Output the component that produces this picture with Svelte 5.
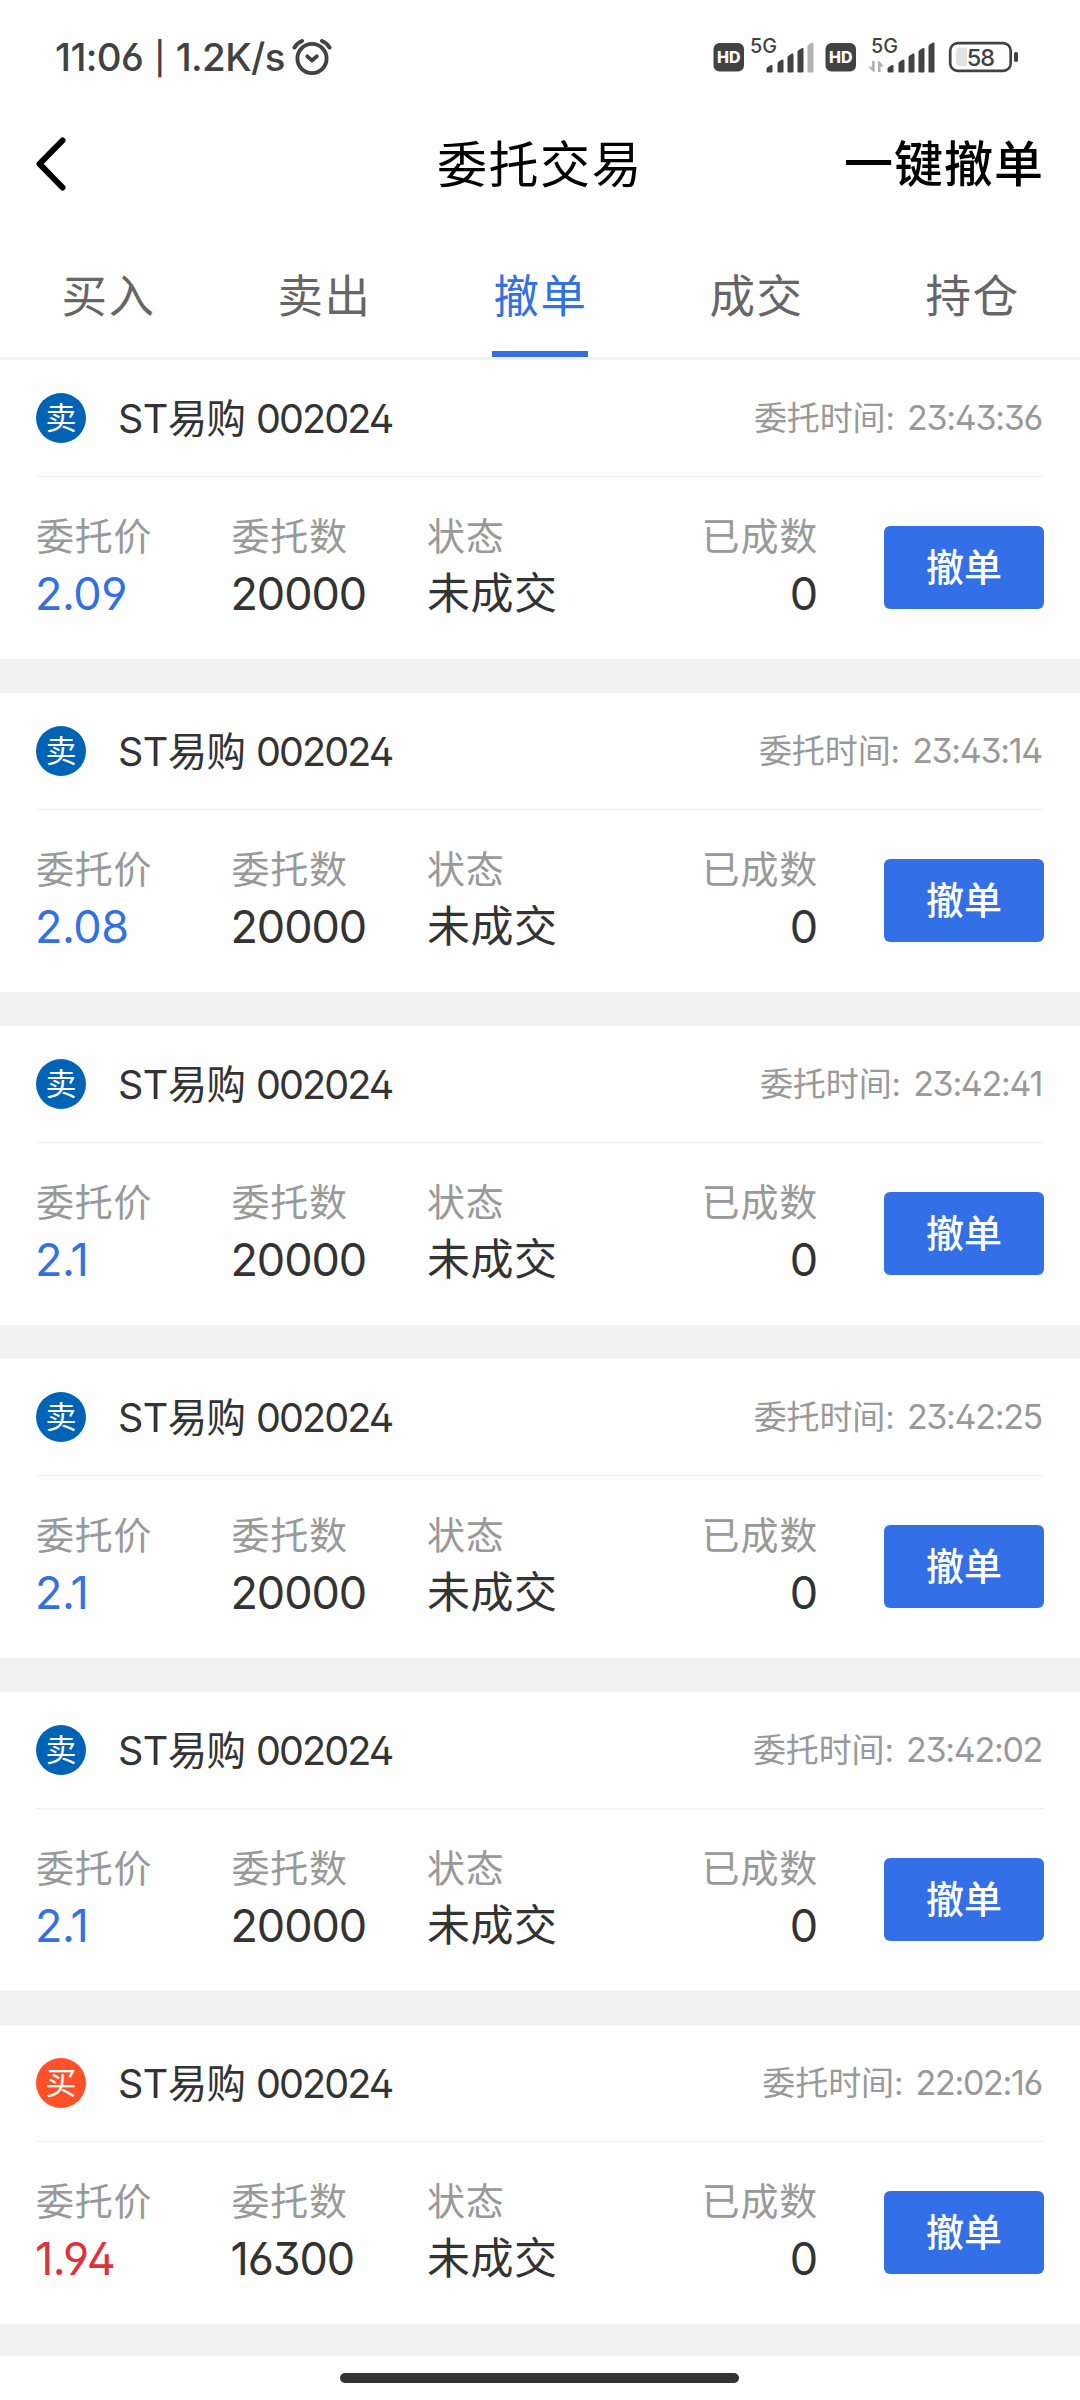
<script>
  let activeTab = '撤单';
  const tabs = ['买入', '卖出', '撤单', '成交', '持仓'];

  // Pending orders, newest first
  let orders = [
    { id: 1, side: 'sell', price: '2.09', amount: 20000, time: '23:43:36' },
    { id: 2, side: 'sell', price: '2.08', amount: 20000, time: '23:43:14' },
    { id: 3, side: 'sell', price: '2.1', amount: 20000, time: '23:42:41' },
    { id: 4, side: 'sell', price: '2.1', amount: 20000, time: '23:42:25' },
    { id: 5, side: 'sell', price: '2.1', amount: 20000, time: '23:42:02' },
    { id: 6, side: 'buy', price: '1.94', amount: 16300, time: '22:02:16' }
  ];

  // Signal bars: left offset and top of each bar
  const bars = [[0, 65], [11, 59.5], [21, 53.5], [31, 48], [41, 42.5]];

  function cancelOrder(id) {
    orders = orders.filter(order => order.id !== id);
  }

  function cancelAll() {
    orders = [];
  }
</script>

<div class="screen">
  <div class="status">
    <span class="clock">11:06 <b>|</b> 1.2K/s</span>
    <svg class="alarm" width="40" height="38" viewBox="0 0 40 38" fill="none" stroke="#424242" stroke-linecap="round">
      <circle cx="20" cy="20.5" r="14.6" stroke-width="3.9" />
      <path d="M2.5 9.5Q5 5 10 3M37.5 9.5Q35 5 30 3" stroke-width="4" />
      <path d="M15.3 18.3l4.7 4.2 4.9-4.2" stroke-width="3.8" stroke-linejoin="round" />
    </svg>

    <svg class="signals" width="310" height="60" viewBox="712 27 310 60">
      {#each [713.5, 825.5] as x}
        <rect {x} y="43" width="30.5" height="28.5" rx="6" fill="#424242" />
        <text class="hd" x={x + 15.2} y="63" text-anchor="middle" textLength="23.5" lengthAdjust="spacingAndGlyphs">HD</text>
      {/each}
      <text class="net" x="750" y="52.8" textLength="27" lengthAdjust="spacingAndGlyphs">5G</text>
      <text class="net" x="871" y="52.8" textLength="27" lengthAdjust="spacingAndGlyphs">5G</text>
      {#each [766.5, 887.5] as start, s}
        {#each bars as [dx, top], i}
          <path
            d="M{start + dx} 71.5V{top + 3.5}q.5-1 2-2l2-1.3q2-.8 2 1V71.5q0 1-1 1h-4q-1 0-1-1z"
            fill={s === 0 && i === 4 ? '#b3b3b3' : '#424242'}
          />
        {/each}
      {/each}
      <path d="M872 61h2.6v11h-1.2l-5-5.2h3.6zM878 72h2.6v-5.5h3.6l-5-5.5H878z" fill="#b3b3b3" />
      <rect x="950.2" y="43.2" width="60.5" height="27.6" rx="7.5" fill="none" stroke="#424242" stroke-width="2.7" />
      <path d="M960 47.5h7v18.5h-7q-4 0-4-4v-10.5q0-4 4-4z" fill="#e3e3e3" />
      <text class="level" x="980.5" y="66" text-anchor="middle">58</text>
      <rect x="1014" y="52" width="4" height="10" rx="1.8" fill="#424242" />
    </svg>
  </div>

  <header>
    <button class="back" aria-label="返回">
      <svg width="32" height="56" viewBox="0 0 32 56" fill="none" stroke="#000" stroke-width="6" stroke-linecap="round" stroke-linejoin="round">
        <path d="M26.5 4.5L3.5 27.8l23 23.7" />
      </svg>
    </button>
    <h1>委托交易</h1>
    <button class="cancel-all" on:click={cancelAll}>一键撤单</button>
  </header>

  <nav>
    {#each tabs as tab}
      <button class:active={tab === activeTab} on:click={() => (activeTab = tab)}>
        <span>{tab}</span>
      </button>
    {/each}
  </nav>

  <main>
    {#each orders as order (order.id)}
      <section class="order">
        <div class="top">
          <span class="badge {order.side}">{order.side === 'sell' ? '卖' : '买'}</span>
          <span class="name">ST易购 <i>002024</i></span>
          <span class="time">委托时间: <i>{order.time}</i></span>
        </div>
        <div class="bottom">
          <div class="cell">
            <span class="label">委托价</span>
            <span class="value {order.side}">{order.price}</span>
          </div>
          <div class="cell">
            <span class="label">委托数</span>
            <span class="value">{order.amount}</span>
          </div>
          <div class="cell">
            <span class="label">状态</span>
            <span class="value cjk">未成交</span>
          </div>
          <div class="cell done">
            <span class="label">已成数</span>
            <span class="value">0</span>
          </div>
          <button class="cancel" on:click={() => cancelOrder(order.id)}>撤单</button>
        </div>
      </section>
    {/each}
  </main>

  <footer><div class="home"></div></footer>
</div>

<style>
  :global(body) {
    margin: 0;
    background: #fefefe;
  }

  .screen {
    display: flex;
    flex-direction: column;
    width: 1080px;
    height: 2400px;
    overflow: hidden;
    background: #fefefe;
    color: #333;
    font-family: Inter, "Noto Sans CJK SC", sans-serif;
    font-feature-settings: "ss01";
  }

  button {
    padding: 0;
    border: 0;
    background: none;
    color: inherit;
    font: inherit;
    font-feature-settings: inherit;
  }

  i {
    font-style: normal;
  }

  .status {
    display: flex;
    align-items: center;
    box-sizing: border-box;
    height: 114px;
    padding: 0 58px 0 55px;
    color: #424242;
  }

  .clock {
    width: 237px;
    font-size: 38.5px;
    font-weight: 500;
    letter-spacing: -0.6px;
    white-space: nowrap;
  }

  /* shorter divider than the digits' own bar glyph */
  .clock b {
    display: inline-block;
    width: 13px;
    font-size: 32px;
    font-weight: 500;
    text-align: center;
    vertical-align: 1px;
  }

  .signals {
    margin-left: auto;
  }

  .hd {
    font-size: 15.5px;
    font-weight: 800;
    fill: #fff;
  }

  .net {
    font-size: 20px;
    font-weight: 500;
    fill: #424242;
  }

  .level {
    font-size: 23.5px;
    font-weight: 500;
    letter-spacing: -1px;
    fill: #424242;
  }

  header {
    display: grid;
    grid-template-columns: 1fr auto 1fr;
    align-items: center;
    height: 100px;
    padding: 0 36px;
    color: #000;
  }

  .back {
    display: flex;
    justify-self: start;
  }

  h1 {
    margin: 0;
    padding-top: 2px;
    font-size: 50px;
    font-weight: 400;
    line-height: 98px;
    letter-spacing: 1.5px;
  }

  .cancel-all {
    justify-self: end;
    padding-top: 2px;
    font-size: 49px;
    font-weight: 500;
    line-height: 98px;
    letter-spacing: 1px;
  }

  nav {
    display: flex;
    height: 143px;
    border-bottom: 3px solid #f2f2f2;
  }

  nav button {
    display: flex;
    flex: 1;
    justify-content: center;
    color: #666;
    font-size: 45.5px;
    line-height: 165px;
    letter-spacing: 1.5px;
  }

  nav button span {
    box-sizing: border-box;
    width: 96px;
    height: 143px;
    padding-left: 1px;
    border-bottom: 6px solid transparent;
  }

  nav .active span {
    border-color: #3370e0;
    color: #3370e0;
  }

  .order {
    height: 299px;
    padding: 0 36px;
    border-bottom: 34px solid #f2f2f2;
  }

  .order:last-child {
    border-bottom-width: 32px;
  }

  .top {
    display: flex;
    align-items: center;
    height: 116px;
    border-bottom: 1px solid #f0f0f0;
  }

  .badge {
    width: 50px;
    margin-right: 32px;
    border-radius: 50%;
    color: #fff;
    font-size: 31px;
    line-height: 50px;
    text-align: center;
  }

  .badge.sell {
    background: #0063b5;
  }

  .badge.buy {
    background: #ff5129;
  }

  .name {
    padding-top: 1px;
    font-size: 39.5px;
    line-height: 62px;
    letter-spacing: -0.6px;
  }

  .name i {
    letter-spacing: -1.9px;
  }

  .time {
    margin: 0 2px 0 auto;
    padding-bottom: 4px;
    color: #999;
    font-size: 33px;
    letter-spacing: -0.1px;
  }

  .time i {
    margin-left: 3px;
    font-size: 34px;
    letter-spacing: -1.3px;
  }

  .bottom {
    display: flex;
    padding-top: 34px;
  }

  .cell {
    display: flex;
    flex-direction: column;
    width: 195.5px;
  }

  .label {
    color: #999;
    font-size: 38px;
    line-height: 50px;
    letter-spacing: 0.8px;
  }

  .value {
    margin-left: -1px;
    font-size: 45px;
    line-height: 66px;
    letter-spacing: -1.1px;
  }

  .value.cjk {
    margin: -1px 0 0;
    font-size: 43px;
    letter-spacing: 0.5px;
  }

  .value.sell,
  .value.buy {
    letter-spacing: -0.5px;
  }

  .value.sell {
    color: #3370e0;
  }

  .value.buy {
    color: #dc3338;
  }

  .done {
    align-items: flex-end;
  }

  .done .value {
    margin-right: 1px;
  }

  .cancel {
    width: 160px;
    height: 83px;
    margin: 15px 0 0 auto;
    padding-bottom: 7px;
    border-radius: 6px;
    background: #3370e7;
    color: #fff;
    font-size: 38px;
    font-weight: 500;
  }

  footer {
    flex: 1;
    display: flex;
    justify-content: center;
    padding: 17px 1px 0 0;
  }

  .home {
    width: 399px;
    height: 10px;
    border-radius: 5px;
    background: #333;
  }
</style>
